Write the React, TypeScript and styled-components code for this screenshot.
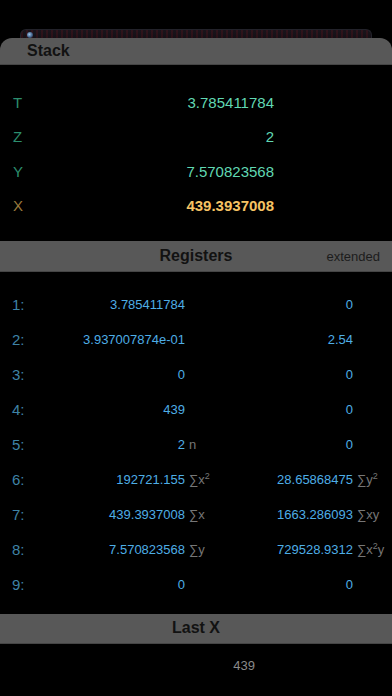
import React from 'react';
import styled, { createGlobalStyle } from 'styled-components';

const Global = createGlobalStyle`
  html, body {
    margin: 0;
    padding: 0;
    background: #000;
  }
  body {
    font-family: "Liberation Sans", Arial, sans-serif;
    -webkit-font-smoothing: antialiased;
  }
`;

const Screen = styled.div`
  width: 392px;
  height: 696px;
  background: #000;
  overflow: hidden;
  padding-top: 29px;
  box-sizing: border-box;
`;

const Strip = styled.div`
  position: relative;
  margin: 0 20px;
  height: 8px;
  border-radius: 6px 6px 0 0;
  border: 1px solid #22222a;
  border-bottom: none;
  background:
    repeating-linear-gradient(90deg, rgba(80, 18, 28, 0.35) 0 2px, rgba(18, 18, 26, 0.4) 2px 5px),
    linear-gradient(180deg, #1e161c 0%, #160f13 100%);

  &::before {
    content: '';
    position: absolute;
    left: 6px;
    top: 2px;
    width: 6px;
    height: 6px;
    border-radius: 50%;
    background: radial-gradient(circle at 40% 40%, #9ec4ea 0%, #3c5a80 60%, transparent 100%);
  }
`;

const Header = styled.div<{ $rounded?: boolean; $align?: 'left' | 'center'; $h?: number }>`
  position: relative;
  height: ${(p) => p.$h ?? 30}px;
  background: #585858;
  border-radius: ${(p) => (p.$rounded ? '12px 12px 0 0' : '0')};
  border-bottom: 1px solid #454545;
  display: flex;
  align-items: center;
  justify-content: ${(p) => (p.$align === 'left' ? 'flex-start' : 'center')};
  padding: 0 27px;
`;

const HeaderTitle = styled.span`
  font-size: 16px;
  font-weight: bold;
  color: #121212;
`;

const HeaderNote = styled.span`
  position: absolute;
  right: 12px;
  top: 50%;
  transform: translateY(-50%);
  font-size: 13px;
  color: #1c1c1c;
`;

const StackList = styled.div`
  padding: 20px 0 18px;
`;

const StackRow = styled.div`
  display: grid;
  grid-template-columns: 13px 60px 201px 1fr;
  height: 34.5px;
  align-items: center;
  font-size: 15px;
`;

const StackLabel = styled.span<{ $x?: boolean }>`
  grid-column: 2;
  color: ${(p) => (p.$x ? '#9a7a3c' : '#2c8e6e')};
`;

const StackValue = styled.span<{ $x?: boolean }>`
  grid-column: 3;
  text-align: right;
  color: ${(p) => (p.$x ? '#f6c364' : '#60d8b3')};
  font-weight: ${(p) => (p.$x ? 'bold' : 'normal')};
`;

const RegList = styled.div`
  padding: 15.5px 0 12px;
`;

const RegRow = styled.div`
  display: grid;
  grid-template-columns: 12px 48px 125px 43px 125px 1fr;
  height: 34.9px;
  align-items: center;
  font-size: 13px;
`;

const RegLabel = styled.span`
  grid-column: 2;
  font-size: 15px;
  color: #3f83a6;
`;

const RegValue = styled.span`
  text-align: right;
  color: #4eaee6;
  white-space: nowrap;
`;

const RegTag = styled.span`
  padding-left: 4px;
  color: #767676;
  white-space: nowrap;

  sup {
    font-size: 9px;
    vertical-align: 5px;
    line-height: 0;
  }
`;

const LastXBody = styled.div`
  height: 44px;
  display: flex;
  align-items: center;
  justify-content: flex-end;
  padding-right: 137px;
  font-size: 13px;
  color: #8a8a8a;
`;

type Tag = React.ReactNode;

const stack = [
  { label: 'T', value: '3.785411784' },
  { label: 'Z', value: '2' },
  { label: 'Y', value: '7.570823568' },
  { label: 'X', value: '439.3937008', x: true },
];

const regs: { n: number; a: string; at?: Tag; b: string; bt?: Tag }[] = [
  { n: 1, a: '3.785411784', b: '0' },
  { n: 2, a: '3.937007874e-01', b: '2.54' },
  { n: 3, a: '0', b: '0' },
  { n: 4, a: '439', b: '0' },
  { n: 5, a: '2', at: 'n', b: '0' },
  { n: 6, a: '192721.155', at: <>∑x<sup>2</sup></>, b: '28.65868475', bt: <>∑y<sup>2</sup></> },
  { n: 7, a: '439.3937008', at: '∑x', b: '1663.286093', bt: '∑xy' },
  { n: 8, a: '7.570823568', at: '∑y', b: '729528.9312', bt: <>∑x<sup>2</sup>y</> },
  { n: 9, a: '0', b: '0' },
];

export default function App() {
  return (
    <Screen>
      <Global />
      <Strip />
      <Header $rounded $align="left" $h={26}>
        <HeaderTitle>Stack</HeaderTitle>
      </Header>
      <StackList>
        {stack.map((s) => (
          <StackRow key={s.label}>
            <StackLabel $x={s.x}>{s.label}</StackLabel>
            <StackValue $x={s.x}>{s.value}</StackValue>
          </StackRow>
        ))}
      </StackList>
      <Header>
        <HeaderTitle>Registers</HeaderTitle>
        <HeaderNote>extended</HeaderNote>
      </Header>
      <RegList>
        {regs.map((r) => (
          <RegRow key={r.n}>
            <RegLabel>{r.n}:</RegLabel>
            <RegValue>{r.a}</RegValue>
            <RegTag>{r.at}</RegTag>
            <RegValue>{r.b}</RegValue>
            <RegTag>{r.bt}</RegTag>
          </RegRow>
        ))}
      </RegList>
      <Header $h={29}>
        <HeaderTitle>Last X</HeaderTitle>
      </Header>
      <LastXBody>439</LastXBody>
    </Screen>
  );
}
